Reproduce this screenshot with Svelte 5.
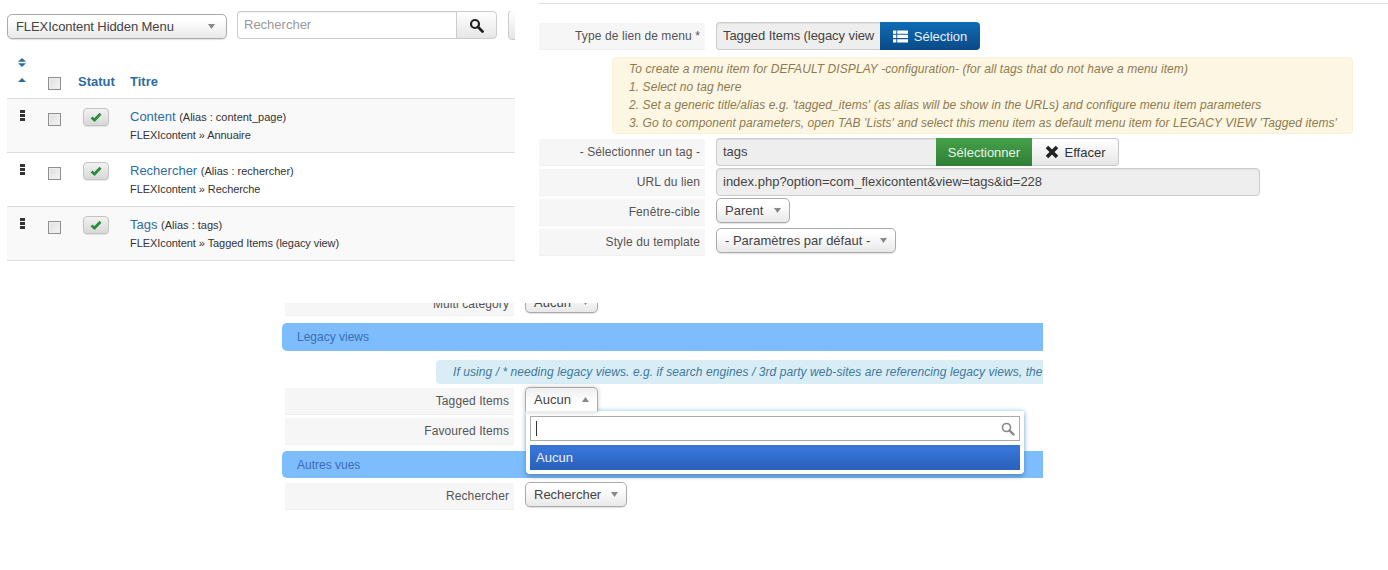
<script>
  const items = [
    { title: "Content", alias: "content_page", type: "FLEXIcontent » Annuaire" },
    { title: "Rechercher", alias: "rechercher", type: "FLEXIcontent » Recherche" },
    { title: "Tags", alias: "tags", type: "FLEXIcontent » Tagged Items (legacy view)" }
  ];
</script>

{#snippet caret(up = false)}
  <svg class="caret" width="7" height="5" viewBox="0 0 7 5">
    <path d={up ? "M0 5 L3.5 0 L7 5 Z" : "M0 0 L3.5 5 L7 0 Z"} fill="#888" />
  </svg>
{/snippet}

{#snippet field(text, width, up = false)}
  <span class="select" style="width:{width}px">
    <span class="select-text">{text}</span>
    {@render caret(up)}
  </span>
{/snippet}

<div class="page">
  <!-- menu items list -->
  <section class="panel list-panel">
    <div class="toolbar">
      <span class="select menu-select">
        <span class="select-text">FLEXIcontent Hidden Menu</span>
        {@render caret()}
      </span>
      <div class="search">
        <span class="search-input">Rechercher</span>
        <span class="search-btn">
          <svg width="15" height="15" viewBox="0 0 15 15">
            <circle cx="6" cy="6" r="4" fill="none" stroke="#222" stroke-width="2.2" />
            <path d="M9 9 L13.5 13.5" stroke="#222" stroke-width="2.8" stroke-linecap="round" />
          </svg>
        </span>
      </div>
      <span class="cut-btn"></span>
    </div>

    <div class="row-grid head">
      <div class="sort">
        <svg width="8" height="9" viewBox="0 0 8 9">
          <path d="M0 3.8 L4 0 L8 3.8 Z M0 5.2 L4 9 L8 5.2 Z" fill="#2f6d9f" />
        </svg>
        <svg width="8" height="4" viewBox="0 0 8 4"><path d="M0 4 L4 0 L8 4 Z" fill="#2f6d9f" /></svg>
      </div>
      <div><span class="box"></span></div>
      <div class="th">Statut</div>
      <div class="th">Titre</div>
    </div>

    {#each items as item, i}
      <div class="row-grid item" class:odd={i % 2 === 0}>
        <div class="drag"><i></i><i></i><i></i></div>
        <div><span class="box"></span></div>
        <div>
          <span class="state">
            <svg width="12" height="10" viewBox="0 0 12 10">
              <path d="M1.5 5.5 L4.5 8 L10.5 1.8" fill="none" stroke="#2f8a3a" stroke-width="2.8" />
            </svg>
          </span>
        </div>
        <div class="title-cell">
          <div><a href="#top">{item.title}</a> <span class="alias">(Alias : {item.alias})</span></div>
          <div class="type">{item.type}</div>
        </div>
      </div>
    {/each}
  </section>

  <!-- menu item edit form -->
  <section class="panel form-panel">
    <div class="form-row first">
      <div class="label">Type de lien de menu *</div>
      <div class="group">
        <span class="input type-input">Tagged Items (legacy view</span>
        <span class="btn blue">
          <svg width="15" height="13" viewBox="0 0 16 13" fill="#fff">
            <path d="M0 0h3.5v3.5H0zM4.5 0H16v3.5H4.5zM0 4.7h3.5v3.5H0zM4.5 4.7H16v3.5H4.5zM0 9.4h3.5v3.5H0zM4.5 9.4H16v3.5H4.5z" />
          </svg>
          Sélection
        </span>
      </div>
    </div>

    <div class="warning">
      <div>To create a menu item for DEFAULT DISPLAY -configuration- (for all tags that do not have a menu item)</div>
      <div>1. Select no tag here</div>
      <div>2. Set a generic title/alias e.g. 'tagged_items' (as alias will be show in the URLs) and configure menu item parameters</div>
      <div>3. Go to component parameters, open TAB 'Lists' and select this menu item as default menu item for LEGACY VIEW 'Tagged items'</div>
    </div>

    <div class="form-rows">
      <div class="form-row">
        <div class="label">- Sélectionner un tag -</div>
        <div class="group">
          <span class="input tag-input">tags</span>
          <span class="btn green">Sélectionner</span>
          <span class="btn plain">
            <svg width="14" height="14" viewBox="0 0 14 14">
              <path d="M2 2 L12 12 M12 2 L2 12" stroke="#222" stroke-width="3.6" />
            </svg>
            Effacer
          </span>
        </div>
      </div>
      <div class="form-row">
        <div class="label">URL du lien</div>
        <span class="input url-input">index.php?option=com_flexicontent&amp;view=tags&amp;id=228</span>
      </div>
      <div class="form-row">
        <div class="label">Fenêtre-cible</div>
        {@render field("Parent", 74)}
      </div>
      <div class="form-row">
        <div class="label">Style du template</div>
        {@render field("- Paramètres par défaut -", 180)}
      </div>
    </div>
  </section>

  <!-- component parameters, legacy views -->
  <section class="panel params-panel">
    <div class="cut-row">
      <div class="param-row multi">
        <div class="label">Multi category</div>
        {@render field("Aucun", 73)}
      </div>
    </div>

    <div class="bar legacy-bar">Legacy views</div>
    <div class="info">If using / * needing legacy views. e.g. if search engines / 3rd party web-sites are referencing legacy views, the</div>

    <div class="param-row tagged">
      <div class="label">Tagged Items</div>
      <div class="open-select">
        <span class="select open" style="width:73px">
          <span class="select-text">Aucun</span>
          {@render caret(true)}
        </span>
        <div class="drop">
          <div class="drop-search">
            <span class="text-cursor"></span>
            <svg width="14" height="14" viewBox="0 0 14 14">
              <circle cx="5.5" cy="5.5" r="4" fill="none" stroke="#888" stroke-width="1.6" />
              <path d="M8.5 8.5 L12.5 12.5" stroke="#888" stroke-width="2.4" stroke-linecap="round" />
            </svg>
          </div>
          <div class="drop-item">Aucun</div>
        </div>
      </div>
    </div>
    <div class="param-row">
      <div class="label">Favoured Items</div>
    </div>

    <div class="bar other-bar">Autres vues</div>
    <div class="param-row last">
      <div class="label">Rechercher</div>
      {@render field("Rechercher", 102)}
    </div>
  </section>
</div>

<style>
  :global(body) {
    background: #fff;
  }

  .page {
    position: relative;
    width: 1388px;
    height: 570px;
    overflow: hidden;
    font-family: "Liberation Sans", Arial, sans-serif;
    font-size: 13px;
    color: #333;
  }

  /* the picture is a collage of three cut-outs */
  .panel {
    position: absolute;
    box-sizing: border-box;
    overflow: hidden;
  }

  .list-panel {
    left: 7px;
    top: 11px;
    width: 508px;
  }

  .form-panel {
    left: 539px;
    top: 3px;
    width: 849px;
    padding-top: 18px;
    border-top: 1px solid #ddd;
  }

  .params-panel {
    left: 282px;
    top: 303px;
    width: 761px;
    height: 221px;
  }

  .toolbar {
    display: flex;
    align-items: center;
    height: 28px;
  }

  .select {
    box-sizing: border-box;
    display: flex;
    align-items: center;
    justify-content: space-between;
    flex: none;
    height: 25px;
    padding: 0 8px 0 8px;
    border: 1px solid #aaa;
    border-radius: 5px;
    background: linear-gradient(#fff 20%, #f4f4f4 60%, #e8e8e8);
    box-shadow: 0 1px 1px rgba(0, 0, 0, 0.12);
    color: #444;
    font-size: 13px;
    white-space: nowrap;
  }

  .menu-select {
    width: 220px;
    margin-top: 3px;
    padding-right: 11px;
    letter-spacing: -0.08px;
  }

  .caret {
    flex: none;
  }

  .search {
    display: flex;
    height: 28px;
    margin-left: 10px;
  }

  .search-input {
    box-sizing: border-box;
    width: 219px;
    padding: 5px 6px;
    border: 1px solid #ccc;
    border-right: 0;
    border-radius: 4px 0 0 4px;
    color: #999;
    font-size: 13px;
    box-shadow: inset 0 1px 1px rgba(0, 0, 0, 0.06);
  }

  .search-btn {
    box-sizing: border-box;
    display: flex;
    align-items: center;
    justify-content: center;
    width: 41px;
    border: 1px solid #ccc;
    border-radius: 0 4px 4px 0;
    background: linear-gradient(#fff, #e6e6e6);
  }

  .cut-btn {
    flex: none;
    width: 20px;
    height: 28px;
    margin-left: 11px;
    border: 1px solid #ccc;
    border-radius: 4px;
    background: linear-gradient(#fff, #e6e6e6);
  }

  .row-grid {
    display: grid;
    grid-template-columns: 34px 30px 52px 1fr;
  }

  .row-grid > div {
    padding-left: 7px;
  }

  .head {
    box-sizing: border-box;
    align-items: end;
    height: 60px;
    padding-bottom: 8px;
    border-bottom: 1px solid #ddd;
  }

  .sort {
    display: flex;
    flex-direction: column;
    gap: 11px;
    padding-left: 11px !important;
    padding-bottom: 8px;
  }

  .sort svg {
    display: block;
  }

  .th {
    color: #2f6d9f;
    font-weight: bold;
    font-size: 13px;
    line-height: 16px;
  }

  .box {
    display: block;
    box-sizing: border-box;
    width: 13px;
    height: 13px;
    border: 1px solid #8f8f8f;
    background: linear-gradient(135deg, #dedede, #f4f4f4);
    box-shadow: inset 0 0 0 1px #eee;
  }

  .item {
    box-sizing: border-box;
    height: 54px;
    border-bottom: 1px solid #ddd;
  }

  .odd {
    background: #f9f9f9;
  }

  .item > div:nth-child(2) {
    padding-top: 14px;
  }

  .item > div:nth-child(3) {
    padding-left: 12px;
    padding-top: 9px;
  }

  .drag {
    display: flex;
    flex-direction: column;
    gap: 1px;
    padding-top: 11px;
    padding-left: 13px !important;
  }

  .drag i {
    display: block;
    width: 5px;
    height: 3px;
    background: #333;
  }

  .state {
    display: flex;
    align-items: center;
    justify-content: center;
    box-sizing: border-box;
    width: 26px;
    height: 18px;
    border: 1px solid #c4c4c4;
    border-radius: 4px;
    background: linear-gradient(#f2f2f2, #d8d8d8);
    box-shadow: 0 1px 1px rgba(0, 0, 0, 0.1);
  }

  .title-cell {
    padding-top: 9px;
    line-height: 17px;
  }

  .title-cell a {
    color: #2f6d9f;
    font-size: 13px;
    text-decoration: none;
  }

  .alias,
  .type {
    font-size: 11px;
    color: #333;
  }

  .type {
    margin-top: 1px;
    letter-spacing: -0.07px;
  }

  .form-row {
    display: grid;
    grid-template-columns: 166px auto;
    column-gap: 11px;
    justify-items: start;
    height: 28px;
  }

  .form-rows {
    display: flex;
    flex-direction: column;
    gap: 2px;
    margin-top: 4px;
  }

  .label {
    box-sizing: border-box;
    width: 100%;
    height: 27px;
    margin-top: 1px;
    padding-right: 5px;
    background: #f6f6f6;
    border-bottom: 1px solid #f0f0f0;
    color: #555;
    font-size: 12px;
    letter-spacing: 0.1px;
    line-height: 26px;
    text-align: right;
    white-space: nowrap;
  }

  .group {
    display: flex;
  }

  .input {
    box-sizing: border-box;
    display: block;
    height: 28px;
    padding: 0 6px;
    border: 1px solid #ccc;
    border-radius: 4px;
    background: #eee;
    color: #444;
    line-height: 26px;
    white-space: nowrap;
    overflow: hidden;
    box-shadow: inset 0 1px 1px rgba(0, 0, 0, 0.06);
  }

  .type-input,
  .tag-input {
    border-right: 0;
    border-radius: 4px 0 0 4px;
  }

  .type-input {
    width: 164px;
    letter-spacing: -0.08px;
  }

  .tag-input {
    width: 220px;
  }

  .url-input {
    width: 544px;
  }

  .btn {
    box-sizing: border-box;
    display: flex;
    align-items: center;
    justify-content: center;
    gap: 6px;
    height: 28px;
    font-size: 13px;
  }

  .blue {
    width: 100px;
    border-radius: 0 4px 4px 0;
    background: linear-gradient(#0f6cb6, #0a4a86);
    color: #e8f0f8;
  }

  .green {
    width: 96px;
    background: linear-gradient(#45a049, #2f7f35);
    color: #e8f4e8;
  }

  .plain {
    width: 87px;
    border: 1px solid #c8c8c8;
    border-left: 0;
    border-radius: 0 4px 4px 0;
    background: linear-gradient(#fff, #e6e6e6);
    color: #333;
  }

  .warning {
    box-sizing: border-box;
    height: 77px;
    margin: 7px 0 0 73px;
    width: 741px;
    padding: 2px 16px 2px;
    border: 1px solid #fbf0d8;
    border-radius: 4px;
    background: #fcf6e3;
    color: #8f7a50;
    font-size: 12px;
    font-style: italic;
    letter-spacing: 0.08px;
    line-height: 18px;
    white-space: nowrap;
  }

  .cut-row {
    display: flex;
    flex-direction: column;
    justify-content: flex-end;
    height: 14px;
    overflow: hidden;
  }

  .param-row {
    flex: none;
    display: grid;
    grid-template-columns: 229px auto;
    column-gap: 11px;
    justify-items: start;
    height: 30px;
    padding-left: 3px;
  }

  .multi {
    height: 29px;
    line-height: 30px;
  }

  /* text sits a bit lower in the cut-off row */
  .multi .label {
    line-height: 30px;
  }

  .multi :global(.select) {
    padding-top: 4px;
  }

  .bar {
    box-sizing: border-box;
    padding-left: 15px;
    border-radius: 5px 0 0 5px;
    background: #7dbdfd;
    color: #3a6db5;
    font-size: 12px;
  }

  .legacy-bar {
    height: 28px;
    margin-top: 6px;
    line-height: 28px;
  }

  .other-bar {
    height: 27px;
    margin-top: 4px;
    line-height: 29px;
  }

  .info {
    box-sizing: border-box;
    height: 24px;
    margin: 9px 0 0 154px;
    padding-left: 17px;
    border-radius: 4px 0 0 4px;
    background: #d9edf7;
    color: #41799a;
    font-size: 12px;
    font-style: italic;
    letter-spacing: 0.07px;
    line-height: 24px;
    white-space: nowrap;
    overflow: hidden;
  }

  .tagged {
    margin-top: 3px;
    position: relative;
    z-index: 2;
  }

  .last {
    margin-top: 4px;
  }

  .open-select {
    position: relative;
  }

  .select.open {
    position: relative;
    z-index: 3;
    border-bottom-color: transparent;
    border-radius: 5px 5px 0 0;
    background: linear-gradient(#eee, #fff 60%);
    box-shadow: 0 0 5px rgba(0, 0, 0, 0.2);
  }

  .drop {
    position: absolute;
    left: 1px;
    top: 24px;
    box-sizing: border-box;
    width: 498px;
    height: 63px;
    padding: 5px 4px 4px;
    background: #fff;
    border-radius: 0 0 4px 4px;
    box-shadow: 0 0 5px rgba(82, 168, 236, 0.6), 0 3px 4px rgba(0, 0, 0, 0.25);
  }

  .drop-search {
    box-sizing: border-box;
    display: flex;
    align-items: center;
    justify-content: space-between;
    height: 25px;
    padding: 0 4px 0 5px;
    border: 1px solid #aaa;
  }

  .text-cursor {
    width: 1px;
    height: 15px;
    background: #333;
  }

  .drop-item {
    height: 25px;
    margin-top: 4px;
    padding-left: 6px;
    background: linear-gradient(#3875d7 20%, #2a62bc 90%);
    color: #eef;
    line-height: 25px;
  }
</style>
